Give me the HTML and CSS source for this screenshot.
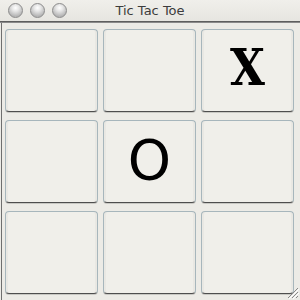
FILE: index.html
```html
<!DOCTYPE html>
<html lang="en">
<head>
  <meta charset="UTF-8" />
  <title>Tic Tac Toe</title>
  <link rel="stylesheet" href="styles.css">
</head>
<body>

  <div class="window">
    <div class="titlebar">
      <div class="lights">
        <span class="light"></span>
        <span class="light"></span>
        <span class="light"></span>
      </div>
      <div class="title">Tic Tac Toe</div>
    </div>

    <div class="board">
      <button class="cell"></button>
      <button class="cell"></button>
      <button class="cell x">X</button>
      <button class="cell"></button>
      <button class="cell o">O</button>
      <button class="cell"></button>
      <button class="cell"></button>
      <button class="cell"></button>
      <button class="cell"></button>
    </div>

    <svg class="grip" width="14" height="14" viewBox="0 0 14 14">
      <path d="M13 3 L3 13 M13 7 L7 13 M13 11 L11 13" stroke="#8a8a8a" stroke-width="1" fill="none"/>
      <path d="M14 4 L4 14 M14 8 L8 14" stroke="#ffffff" stroke-width="1" fill="none"/>
    </svg>
  </div>

</body>
</html>
```

FILE: styles.css
```css
* {
  box-sizing: border-box;
}

body {
  margin: 0;
  padding: 0;
  background: #ecebe6;
  font-family: 'DejaVu Sans', sans-serif;
}

.window {
  position: relative;
  width: 300px;
  height: 300px;
  background: #ecebe6;
  overflow: hidden;
}

.titlebar {
  position: relative;
  height: 23px;
  background: linear-gradient(#f0efeb, #e6e5e0);
  border-bottom: 1px solid #8a8a8a;
  box-shadow: inset 0 -1px 0 #5e5e5e;
}

.lights {
  display: flex;
  gap: 7px;
  padding: 3px 0 0 8px;
}

.light {
  width: 15px;
  height: 15px;
  border-radius: 50%;
  border: 1px solid #8c8c8c;
  background: radial-gradient(circle at 50% 30%, #ffffff 0, #e6e6e6 30%, #b4b4b4 75%, #cfcfcf 100%);
}

.title {
  position: absolute;
  top: 3px;
  left: 0;
  right: 0;
  text-align: center;
  font-size: 13px;
  color: #3c3c3c;
}

.board {
  display: grid;
  grid-template-columns: 93px 93px 93px;
  grid-template-rows: 83px 83px 83px;
  gap: 8px 5px;
  margin-left: 1px;
  padding: 6px 0 0 3px;
  border-left: 1px solid #6f6f6f;
  height: 277px;
}

.cell {
  margin: 0;
  padding: 0;
  background: #f0efea;
  border: 1px solid #a7b6bc;
  border-bottom-color: #4e4e4e;
  border-radius: 4px;
  box-shadow: 0 1px 0 rgba(0, 0, 0, 0.15), inset 2px 0 0 #e9e8e3, inset -2px 0 0 #e9e8e3;
  color: #000;
  line-height: 1;
}

.x {
  font-family: 'DejaVu Serif Condensed', 'DejaVu Serif', serif;
  font-weight: bold;
  font-size: 50px;
  padding-bottom: 6px;
}

.o {
  font-family: 'DejaVu Sans', sans-serif;
  font-size: 55px;
  padding-bottom: 2px;
}

.grip {
  position: absolute;
  right: 1px;
  bottom: 1px;
}
```
